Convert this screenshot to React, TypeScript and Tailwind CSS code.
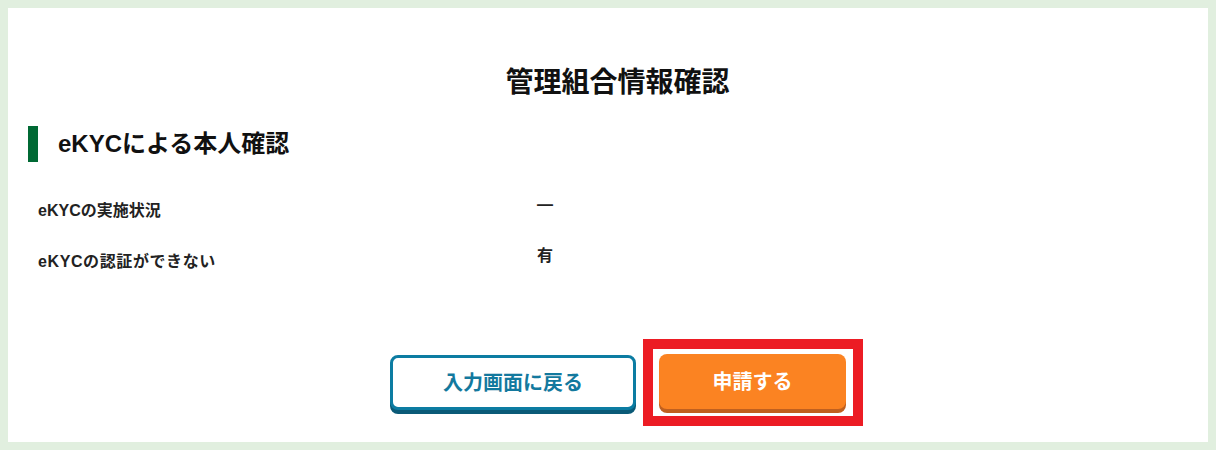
import React from "react";

export default function App() {
  const font = { fontFamily: '"Liberation Sans", "Noto Sans CJK JP", "Noto Sans", sans-serif' };
  return (
    <div className="h-[450px] w-[1216px] bg-[#e1efdf] p-2" style={font}>
      <div className="h-full w-full bg-white pt-[54px]">
        <h1 className="pl-[19px] text-center text-[28px] font-bold leading-[42px] text-[#111]">
          管理組合情報確認
        </h1>
        <div className="mt-[22px] flex items-center pl-5">
          <div className="h-9 w-[10px] bg-[#006934]" />
          <h2 className="ml-5 text-[24px] font-bold leading-9 text-[#111]">
            eKYCによる本人確認
          </h2>
        </div>
        <div className="mt-[33px] pl-[30px]">
          <div className="flex h-[51px] items-start">
            <div className="w-[499px] pt-[6px] text-[16px] font-bold leading-5 text-[#222]">
              eKYCの実施状況
            </div>
            <div className="text-[16px] font-bold leading-5 text-[#222]">―</div>
          </div>
          <div className="flex h-[51px] items-start">
            <div className="w-[499px] pt-[6px] text-[16px] font-bold leading-5 tracking-[0.6px] text-[#222]">
              eKYCの認証ができない
            </div>
            <div className="text-[16px] font-bold leading-5 text-[#222]">有</div>
          </div>
        </div>
        <div className="mt-[42px] flex items-start pl-[382px]">
          <button className="mt-4 flex h-[55px] w-[246px] items-center justify-center rounded-lg border-[3px] border-[#0c7ca2] bg-white text-[20px] font-bold text-[#13799e] shadow-[0_4px_0_#0a5a77]">
            入力画面に戻る
          </button>
          <div className="ml-[7px] border-[10px] border-[#ec1c24] bg-white pb-[7px] pl-[6px] pr-[7px] pt-[5px]">
            <button className="flex h-[55px] w-[187px] items-center justify-center rounded-lg bg-[#fb8322] text-[20px] font-bold text-white shadow-[0_4px_0_#c0601f]">
              申請する
            </button>
          </div>
        </div>
      </div>
    </div>
  );
}
